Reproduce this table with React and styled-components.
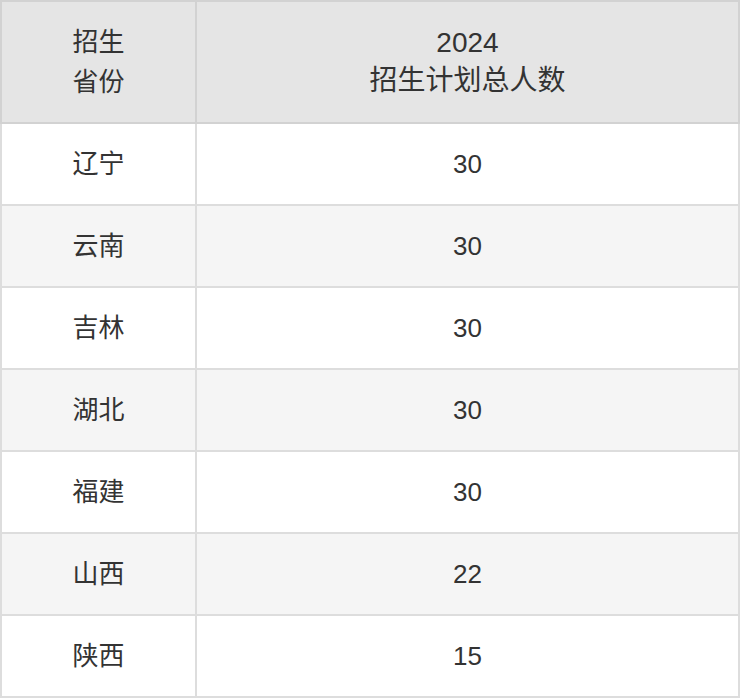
import React from "react";
import styled, { createGlobalStyle } from "styled-components";

const GlobalStyle = createGlobalStyle`
  html, body {
    margin: 0;
    padding: 0;
    background: #ffffff;
  }
  body {
    font-family: "Liberation Sans", "Noto Sans CJK SC", sans-serif;
    color: #333333;
  }
`;

const Table = styled.table`
  width: 740px;
  border-collapse: collapse;
  table-layout: fixed;
  font-size: 26px;
`;

const HeadCell = styled.th`
  height: 120px;
  padding: 0;
  background: #e5e5e5;
  border: 2px solid #d2d2d2;
  font-weight: normal;
  font-size: ${(p) => (p.$narrow ? "26px" : "28px")};
  line-height: ${(p) => (p.$narrow ? "40px" : "38px")};
  text-align: center;
  width: ${(p) => (p.$narrow ? "193px" : "auto")};
`;

const Row = styled.tr`
  background: ${(p) => (p.$alt ? "#f5f5f5" : "#ffffff")};
`;

const Cell = styled.td`
  height: 80px;
  padding: 0;
  border: 2px solid #dddddd;
  text-align: center;
  line-height: 30px;
`;

const rows = [
  ["辽宁", "30"],
  ["云南", "30"],
  ["吉林", "30"],
  ["湖北", "30"],
  ["福建", "30"],
  ["山西", "22"],
  ["陕西", "15"],
];

export default function App() {
  return (
    <>
      <GlobalStyle />
      <Table>
        <thead>
          <tr>
            <HeadCell $narrow>
              招生
              <br />
              省份
            </HeadCell>
            <HeadCell>
              2024
              <br />
              招生计划总人数
            </HeadCell>
          </tr>
        </thead>
        <tbody>
          {rows.map(([prov, num], i) => (
            <Row key={prov} $alt={i % 2 === 1}>
              <Cell>{prov}</Cell>
              <Cell>{num}</Cell>
            </Row>
          ))}
        </tbody>
      </Table>
    </>
  );
}
